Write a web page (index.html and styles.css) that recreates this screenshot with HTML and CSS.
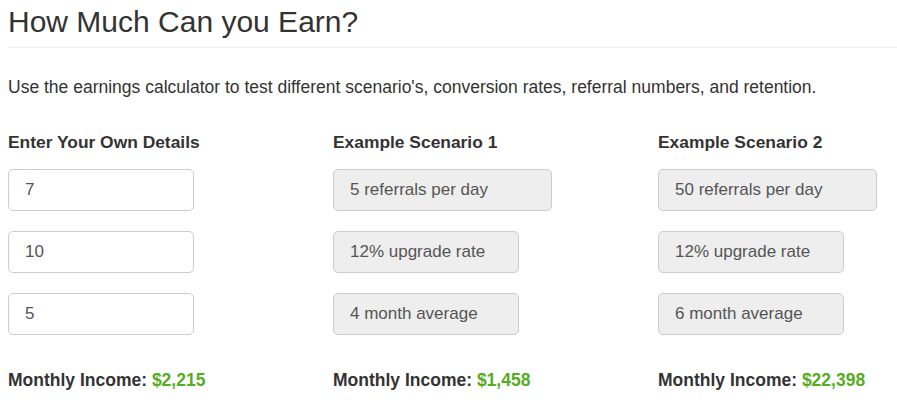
FILE: index.html
```html
<!DOCTYPE html>
<html lang="en">
<head>
  <meta charset="UTF-8" />
  <meta name="viewport" content="width=device-width, initial-scale=1.0"/>
  <title>How Much Can you Earn?</title>
  <link rel="stylesheet" href="styles.css">
</head>
<body>
  <div class="page">
    <h1 class="page-header">How Much Can you Earn?</h1>
    <p class="intro">Use the earnings calculator to test different scenario's, conversion rates, referral numbers, and retention.</p>

    <div class="calc">
      <div class="calc-col">
        <h4>Enter Your Own Details</h4>
        <input class="field" type="text" value="7" />
        <input class="field" type="text" value="10" />
        <input class="field" type="text" value="5" />
        <p class="income">Monthly Income: <span class="amount">$2,215</span></p>
      </div>

      <div class="calc-col">
        <h4>Example Scenario 1</h4>
        <input class="field field-wide" type="text" value="5 referrals per day" readonly />
        <input class="field" type="text" value="12% upgrade rate" readonly />
        <input class="field" type="text" value="4 month average" readonly />
        <p class="income">Monthly Income: <span class="amount">$1,458</span></p>
      </div>

      <div class="calc-col">
        <h4>Example Scenario 2</h4>
        <input class="field field-wide" type="text" value="50 referrals per day" readonly />
        <input class="field" type="text" value="12% upgrade rate" readonly />
        <input class="field" type="text" value="6 month average" readonly />
        <p class="income">Monthly Income: <span class="amount">$22,398</span></p>
      </div>
    </div>
  </div>
</body>
</html>
```

FILE: styles.css
```css
body, html {
  margin: 0;
  padding: 0;
  background: #fff;
  color: #333;
  font-family: 'Liberation Sans', Arial, Helvetica, sans-serif;
  overflow: hidden;
}

.page {
  padding: 5px 0 0 8px;
}

.page-header {
  margin: 0;
  padding-bottom: 9px;
  border-bottom: 1px solid #eee;
  font-size: 30px;
  font-weight: normal;
  line-height: 33px;
}

.intro {
  margin: 28px 0 0;
  font-size: 17.5px;
  line-height: 23px;
}

.calc {
  display: grid;
  grid-template-columns: 325px 325px 1fr;
  margin-top: 32px;
}

.calc-col h4 {
  margin: 0 0 16px;
  font-size: 17.4px;
  font-weight: bold;
  line-height: 22px;
}

.field {
  display: block;
  box-sizing: border-box;
  width: 186px;
  height: 42px;
  margin: 0 0 20px;
  padding: 0 16px;
  border: 1px solid #ccc;
  border-radius: 5px;
  background: #fff;
  color: #555;
  font-family: inherit;
  font-size: 17px;
  outline: none;
}

.field[readonly] {
  background: #eee;
}

.field-wide {
  width: 219px;
}

.income {
  margin: 34px 0 0;
  font-size: 17.5px;
  font-weight: bold;
  line-height: 23px;
}

.amount {
  color: #55ad1f;
}
```
